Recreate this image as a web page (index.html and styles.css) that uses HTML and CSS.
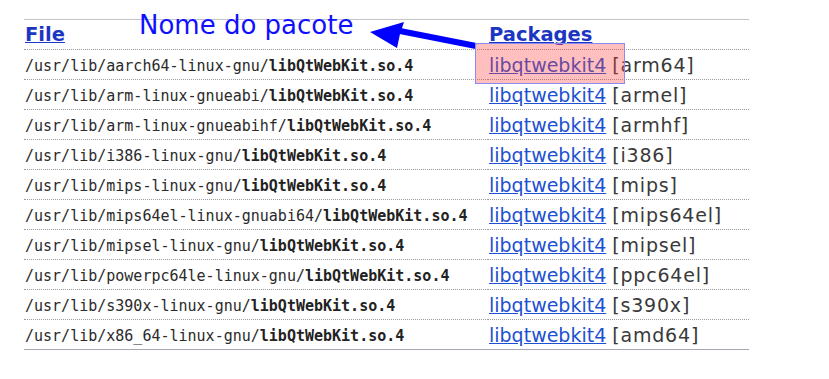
FILE: index.html
```html
<!DOCTYPE html>
<html>
<head>
<meta charset="utf-8">
<link rel="stylesheet" href="styles.css">
</head>
<body>
<div class="page">
  <table class="files">
    <thead>
      <tr><th class="col-file"><a href="#">File</a></th><th class="col-pkg"><a href="#">Packages</a></th></tr>
    </thead>
    <tbody>
      <tr><td class="path">/usr/lib/aarch64-linux-gnu/<b>libQtWebKit.so.4</b></td><td class="pkg"><a href="#">libqtwebkit4</a> <span class="arch">[arm64]</span></td></tr>
      <tr><td class="path">/usr/lib/arm-linux-gnueabi/<b>libQtWebKit.so.4</b></td><td class="pkg"><a href="#">libqtwebkit4</a> <span class="arch">[armel]</span></td></tr>
      <tr><td class="path">/usr/lib/arm-linux-gnueabihf/<b>libQtWebKit.so.4</b></td><td class="pkg"><a href="#">libqtwebkit4</a> <span class="arch">[armhf]</span></td></tr>
      <tr><td class="path">/usr/lib/i386-linux-gnu/<b>libQtWebKit.so.4</b></td><td class="pkg"><a href="#">libqtwebkit4</a> <span class="arch">[i386]</span></td></tr>
      <tr><td class="path">/usr/lib/mips-linux-gnu/<b>libQtWebKit.so.4</b></td><td class="pkg"><a href="#">libqtwebkit4</a> <span class="arch">[mips]</span></td></tr>
      <tr><td class="path">/usr/lib/mips64el-linux-gnuabi64/<b>libQtWebKit.so.4</b></td><td class="pkg"><a href="#">libqtwebkit4</a> <span class="arch">[mips64el]</span></td></tr>
      <tr><td class="path">/usr/lib/mipsel-linux-gnu/<b>libQtWebKit.so.4</b></td><td class="pkg"><a href="#">libqtwebkit4</a> <span class="arch">[mipsel]</span></td></tr>
      <tr><td class="path">/usr/lib/powerpc64le-linux-gnu/<b>libQtWebKit.so.4</b></td><td class="pkg"><a href="#">libqtwebkit4</a> <span class="arch">[ppc64el]</span></td></tr>
      <tr><td class="path">/usr/lib/s390x-linux-gnu/<b>libQtWebKit.so.4</b></td><td class="pkg"><a href="#">libqtwebkit4</a> <span class="arch">[s390x]</span></td></tr>
      <tr><td class="path">/usr/lib/x86_64-linux-gnu/<b>libQtWebKit.so.4</b></td><td class="pkg"><a href="#">libqtwebkit4</a> <span class="arch">[amd64]</span></td></tr>
    </tbody>
  </table>
  <div class="note">Nome do pacote</div>
  <svg class="arrow" width="120" height="40" viewBox="0 0 120 40">
    <path d="M106 26 L30 11" stroke="#0000ff" stroke-width="6" fill="none"/>
    <path d="M0 12 L34 2 L30 14 L27 28 Z" fill="#0000ff"/>
  </svg>
  <div class="highlight"></div>
</div>
</body>
</html>
```
FILE: styles.css
```css
html, body {
  margin: 0;
  padding: 0;
  background: #fff;
}
.page {
  position: relative;
  width: 829px;
  height: 379px;
  padding: 19px 0 0 24px;
  box-sizing: border-box;
}
.files {
  width: 725px;
  border-collapse: collapse;
  border-top: 1px solid #c4c4cc;
  border-bottom: 1px solid #a8a8b4;
}
.files th {
  text-align: left;
  font-family: "DejaVu Sans", sans-serif;
  font-weight: bold;
  font-size: 19.5px;
  height: 30px;
  padding: 0 1px 3px 1px;
  vertical-align: bottom;
  line-height: 22px;
  box-sizing: border-box;
  border-bottom: 1px dotted #9a9a9a;
}
.files th a {
  color: #1c36c4;
}
.col-file {
  width: 464px;
}
.files td {
  height: 30px;
  padding: 0 1px;
  box-sizing: border-box;
  border-bottom: 1px dotted #9a9a9a;
  vertical-align: middle;
}
.files tbody tr:last-child td {
  border-bottom: none;
}
.files td.path {
  font-family: "DejaVu Sans Mono", monospace;
  font-size: 15px;
  color: #2a2a2a;
  padding-top: 3px;
}
.path b {
  font-weight: bold;
  color: #222;
}
.pkg {
  font-family: "DejaVu Sans", sans-serif;
  font-size: 19px;
  color: #333;
  white-space: nowrap;
}
.pkg a {
  color: #2050d2;
}
.arch {
  letter-spacing: 0.8px;
  color: #3a3a3a;
}
.note {
  position: absolute;
  left: 139px;
  top: 9px;
  font-family: "DejaVu Sans", sans-serif;
  font-size: 26px;
  color: #1010ff;
  line-height: 32px;
}
.arrow {
  position: absolute;
  left: 370px;
  top: 20px;
}
.highlight {
  position: absolute;
  left: 475px;
  top: 43px;
  width: 150px;
  height: 41px;
  box-sizing: border-box;
  background: rgba(255, 60, 60, 0.33);
  border: 1px solid #8a8af0;
}
```
